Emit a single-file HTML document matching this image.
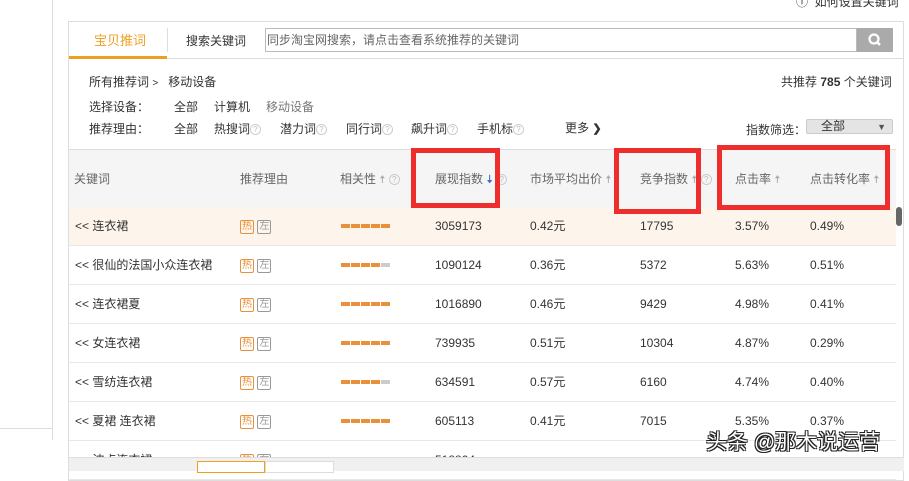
<!DOCTYPE html>
<html><head><meta charset="utf-8"><style>
*{margin:0;padding:0;box-sizing:border-box}
body{width:909px;height:471px;overflow:hidden;background:#fff;font-family:"Liberation Sans","Noto Sans CJK SC",sans-serif;font-size:12px;line-height:16px;color:#333;position:relative}
.a{position:absolute;white-space:nowrap;line-height:16px}
.g{color:#666}
.row{position:absolute;left:69px;width:827px;height:39px;border-bottom:1px solid #e8e8e8}
.row .a{top:11px}
.tag{display:inline-block;width:14px;height:14px;border:1px solid #e8913a;color:#e8913a;font-size:10px;line-height:12px;text-align:center;border-radius:2px;vertical-align:middle}
.tag2{border-color:#999;color:#999}
.bar{position:absolute;top:17px;left:272px}
.bar i{float:left;width:9px;height:4px;background:#e8913a;margin-right:1px}
.bar i.e{background:#ccc}
.q{display:inline-block;width:11px;height:11px;border:1px solid #ccc;border-radius:50%;font-size:8px;line-height:9px;text-align:center;color:#bbb;vertical-align:middle}
.up{color:#aaa;font-size:11px}
.rb{position:absolute;border:5px solid #ee2d2d}
</style></head><body>
<div class="a" style="left:52px;top:0;width:1px;height:440px;background:#ddd"></div>
<div class="a" style="left:0;top:428px;width:53px;height:1px;background:#ddd"></div>
<div class="a" style="left:796px;top:-6px;color:#333">ⓘ&nbsp; 如何设置关键词</div>
<div class="a" style="left:68px;top:21px;width:836px;height:460px;border:1px solid #ddd"></div>
<div class="a" style="left:69px;top:58px;width:834px;height:1px;background:#ddd"></div>
<div class="a" style="left:69px;top:56px;width:98px;height:3px;background:#f0a020"></div>
<div class="a" style="left:167px;top:28px;width:1px;height:24px;background:#ddd"></div>
<div class="a" style="left:94px;top:33px;color:#f0a020;font-size:13px">宝贝推词</div>
<div class="a" style="left:186px;top:33px;font-size:12px">搜索关键词</div>
<div class="a" style="left:265px;top:28px;width:592px;height:24px;border:1px solid #bbb;color:#666;padding:3px 1px;font-size:12px">同步淘宝网搜索，请点击查看系统推荐的关键词</div>
<div class="a" style="left:857px;top:28px;width:36px;height:24px;background:#aaa"><svg width="36" height="24"><circle cx="17" cy="11" r="4.5" stroke="#fff" stroke-width="2.2" fill="none"/><path d="M20 14l3 3" stroke="#fff" stroke-width="2.5"/></svg></div>
<div class="a" style="left:89px;top:74px">所有推荐词 <span style="font-size:10px">&gt;</span>&nbsp;&nbsp; 移动设备</div>
<div class="a" style="left:781px;top:74px">共推荐 <b>785</b> 个关键词</div>
<div class="a" style="left:89px;top:99px">选择设备：</div>
<div class="a" style="left:174px;top:99px">全部</div>
<div class="a" style="left:214px;top:99px">计算机</div>
<div class="a" style="left:266px;top:99px;color:#777">移动设备</div>
<div class="a" style="left:89px;top:121px">推荐理由：</div>
<div class="a" style="left:174px;top:121px">全部</div>
<div class="a" style="left:214px;top:121px">热搜词<span class="q">?</span></div>
<div class="a" style="left:280px;top:121px">潜力词<span class="q">?</span></div>
<div class="a" style="left:346px;top:121px">同行词<span class="q">?</span></div>
<div class="a" style="left:411px;top:121px">飙升词<span class="q">?</span></div>
<div class="a" style="left:477px;top:121px">手机标<span class="q">?</span></div>
<div class="a" style="left:565px;top:120px">更多 <b style="font-size:11px">❯</b></div>
<div class="a" style="left:746px;top:122px">指数筛选：</div>
<div class="a" style="left:806px;top:119px;width:87px;height:15px;background:#e4e4e4;border:1px solid #ccc;border-radius:2px;padding-left:14px;line-height:12px">全部<span style="position:absolute;right:6px;top:1px;font-size:9px;color:#555">▼</span></div>
<div class="a" style="left:69px;top:149px;width:827px;height:58px;background:#f5f5f5;border-top:1px solid #ddd"></div>
<div class="a g" style="left:74px;top:171px">关键词</div>
<div class="a g" style="left:240px;top:171px">推荐理由</div>
<div class="a g" style="left:340px;top:171px">相关性 <span class="up">🠅</span> <span class="q">?</span></div>
<div class="a g" style="left:435px;top:171px">展现指数 <span style="color:#3b6fc6">🠇</span> <span class="q">?</span></div>
<div class="a g" style="left:530px;top:171px">市场平均出价 <span class="up">🠅</span></div>
<div class="a g" style="left:640px;top:171px">竞争指数 <span class="up">🠅</span> <span class="q">?</span></div>
<div class="a g" style="left:735px;top:171px">点击率 <span class="up">🠅</span></div>
<div class="a g" style="left:810px;top:171px">点击转化率 <span class="up">🠅</span></div>
<div class="row" style="top:207px;background:#fdf5eb"><span class="a" style="left:6px">&lt;&lt; 连衣裙</span><span class="a" style="left:171px"><span class="tag">热</span> <span class="tag tag2">左</span></span><div class="bar"><i></i><i></i><i></i><i></i><i></i></div><span class="a" style="left:366px">3059173</span><span class="a" style="left:461px">0.42元</span><span class="a" style="left:571px">17795</span><span class="a" style="left:666px">3.57%</span><span class="a" style="left:741px">0.49%</span></div>
<div class="row" style="top:246px"><span class="a" style="left:6px">&lt;&lt; 很仙的法国小众连衣裙</span><span class="a" style="left:171px"><span class="tag">热</span> <span class="tag tag2">左</span></span><div class="bar"><i></i><i></i><i></i><i></i><i class="e"></i></div><span class="a" style="left:366px">1090124</span><span class="a" style="left:461px">0.36元</span><span class="a" style="left:571px">5372</span><span class="a" style="left:666px">5.63%</span><span class="a" style="left:741px">0.51%</span></div>
<div class="row" style="top:285px"><span class="a" style="left:6px">&lt;&lt; 连衣裙夏</span><span class="a" style="left:171px"><span class="tag">热</span> <span class="tag tag2">左</span></span><div class="bar"><i></i><i></i><i></i><i></i><i></i></div><span class="a" style="left:366px">1016890</span><span class="a" style="left:461px">0.46元</span><span class="a" style="left:571px">9429</span><span class="a" style="left:666px">4.98%</span><span class="a" style="left:741px">0.41%</span></div>
<div class="row" style="top:324px"><span class="a" style="left:6px">&lt;&lt; 女连衣裙</span><span class="a" style="left:171px"><span class="tag">热</span> <span class="tag tag2">左</span></span><div class="bar"><i></i><i></i><i></i><i></i><i></i></div><span class="a" style="left:366px">739935</span><span class="a" style="left:461px">0.51元</span><span class="a" style="left:571px">10304</span><span class="a" style="left:666px">4.87%</span><span class="a" style="left:741px">0.29%</span></div>
<div class="row" style="top:363px"><span class="a" style="left:6px">&lt;&lt; 雪纺连衣裙</span><span class="a" style="left:171px"><span class="tag">热</span> <span class="tag tag2">左</span></span><div class="bar"><i></i><i></i><i></i><i></i><i class="e"></i></div><span class="a" style="left:366px">634591</span><span class="a" style="left:461px">0.57元</span><span class="a" style="left:571px">6160</span><span class="a" style="left:666px">4.74%</span><span class="a" style="left:741px">0.40%</span></div>
<div class="row" style="top:402px"><span class="a" style="left:6px">&lt;&lt; 夏裙 连衣裙</span><span class="a" style="left:171px"><span class="tag">热</span> <span class="tag tag2">左</span></span><div class="bar"><i></i><i></i><i></i><i></i><i></i></div><span class="a" style="left:366px">605113</span><span class="a" style="left:461px">0.41元</span><span class="a" style="left:571px">7015</span><span class="a" style="left:666px">5.35%</span><span class="a" style="left:741px">0.37%</span></div>
<div class="row" style="top:441px"><span class="a" style="left:6px">&lt;&lt; 波点连衣裙</span><span class="a" style="left:171px"><span class="tag">热</span> <span class="tag tag2">左</span></span><span class="a" style="left:366px">518804</span></div>
<div class="a" style="left:69px;top:457px;width:835px;height:14px;background:#f0f0f0;border-top:1px solid #ddd"></div>
<div class="a" style="left:197px;top:461px;width:68px;height:12px;background:#fff;border:1px solid #f0a020"></div>
<div class="a" style="left:265px;top:461px;width:69px;height:12px;background:#fff;border:1px solid #ddd"></div>
<div class="a" style="left:896px;top:207px;width:6px;height:19px;background:#666;border-radius:3px"></div>
<div class="rb" style="left:411px;top:148px;width:89px;height:60px"></div>
<div class="rb" style="left:614px;top:148px;width:87px;height:66px"></div>
<div class="rb" style="left:717px;top:145px;width:173px;height:65px"></div>
<div class="a" style="left:706px;top:430px;font-size:21px;line-height:26px;color:#fff;text-shadow:1px 1px 0 #222,-1px -1px 0 #222,1px -1px 0 #222,-1px 1px 0 #222">头条 @那木说运营</div>
</body></html>
